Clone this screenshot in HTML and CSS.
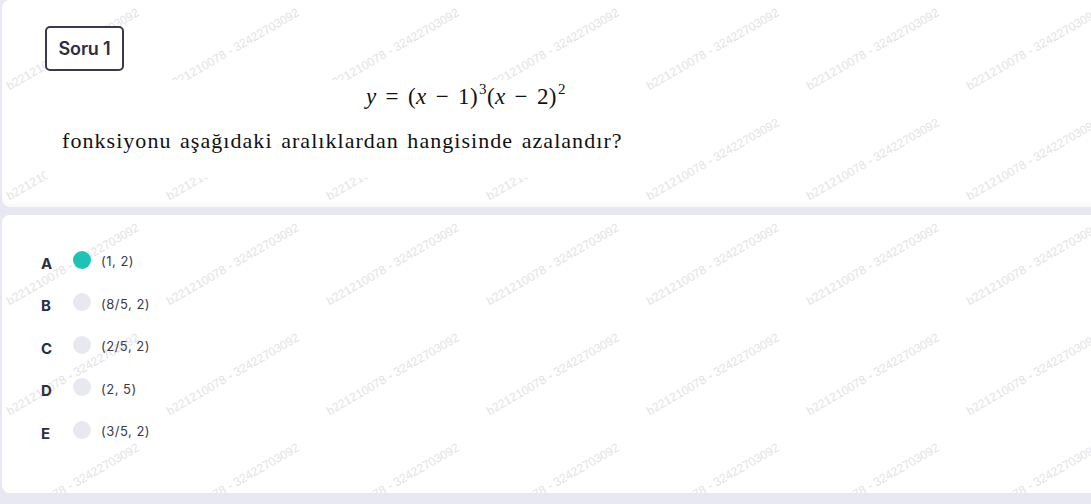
FILE: index.html
```html
<!DOCTYPE html>
<html lang="tr">
<head>
<meta charset="utf-8">
<title>Soru 1</title>
<link rel="stylesheet" href="styles.css">
</head>
<body>
<main class="page">
  <section class="card card-question">
    <div class="watermark" aria-hidden="true">
      <span>b221210078 - 32422703092</span><span>b221210078 - 32422703092</span><span>b221210078 - 32422703092</span><span>b221210078 - 32422703092</span><span>b221210078 - 32422703092</span><span>b221210078 - 32422703092</span><span>b221210078 - 32422703092</span>
      <span>b221210078 - 32422703092</span><span>b221210078 - 32422703092</span><span>b221210078 - 32422703092</span><span>b221210078 - 32422703092</span><span>b221210078 - 32422703092</span><span>b221210078 - 32422703092</span><span>b221210078 - 32422703092</span>
    </div>
    <div class="card-body">
      <div class="badge">Soru 1</div>
      <div class="question">
        <div class="formula"><i>y</i><span class="op">=</span>(<i>x</i><span class="op">−</span>1)<sup>3</sup>(<i>x</i><span class="op">−</span>2)<sup>2</sup></div>
        <p class="stem">fonksiyonu aşağıdaki aralıklardan hangisinde azalandır?</p>
      </div>
    </div>
  </section>

  <section class="card card-options">
    <div class="watermark" aria-hidden="true">
      <span>b221210078 - 32422703092</span><span>b221210078 - 32422703092</span><span>b221210078 - 32422703092</span><span>b221210078 - 32422703092</span><span>b221210078 - 32422703092</span><span>b221210078 - 32422703092</span><span>b221210078 - 32422703092</span>
      <span>b221210078 - 32422703092</span><span>b221210078 - 32422703092</span><span>b221210078 - 32422703092</span><span>b221210078 - 32422703092</span><span>b221210078 - 32422703092</span><span>b221210078 - 32422703092</span><span>b221210078 - 32422703092</span>
      <span>b221210078 - 32422703092</span><span>b221210078 - 32422703092</span><span>b221210078 - 32422703092</span><span>b221210078 - 32422703092</span><span>b221210078 - 32422703092</span><span>b221210078 - 32422703092</span><span>b221210078 - 32422703092</span>
    </div>
    <ul class="options">
      <li class="option selected"><span class="letter">A</span><span class="dot"></span><span class="text">(1, 2)</span></li>
      <li class="option"><span class="letter">B</span><span class="dot"></span><span class="text">(8/5, 2)</span></li>
      <li class="option"><span class="letter">C</span><span class="dot"></span><span class="text">(2/5, 2)</span></li>
      <li class="option"><span class="letter">D</span><span class="dot"></span><span class="text">(2, 5)</span></li>
      <li class="option"><span class="letter">E</span><span class="dot"></span><span class="text">(3/5, 2)</span></li>
    </ul>
  </section>
</main>
</body>
</html>
```

FILE: styles.css
```css
* { box-sizing: border-box; }

html, body {
  margin: 0;
  padding: 0;
  overflow: hidden;
}

body {
  background: #e7e8f2;
  font-family: "Inter", "Noto Sans", sans-serif;
  width: 1091px;
  height: 504px;
}

.page {
  display: flex;
  flex-direction: column;
  gap: 8px;
  padding-left: 2px;
  margin-right: -20px;
}

.card {
  position: relative;
  overflow: hidden;
  background: #ffffff;
  border-radius: 8px;
}

.card-question {
  height: 207px;
  box-shadow: inset 0 -6px 6px -4px rgba(40, 40, 80, 0.04);
}

.card-options {
  height: 278px;
}

/* watermark tiles */
.watermark {
  position: absolute;
  inset: 0;
  display: grid;
  grid-template-columns: repeat(7, 160px);
  grid-auto-rows: 110px;
  pointer-events: none;
  z-index: 0;
}

.watermark span {
  display: block;
  padding: 79px 0 0 9px;
  font-family: "Liberation Sans", Arial, sans-serif;
  font-size: 12px;
  line-height: 14px;
  white-space: nowrap;
  color: #e2e2e5;
  transform-origin: 9px 93px;
  transform: rotate(-30deg);
}

.card-body {
  position: relative;
  z-index: 1;
  padding: 26px 0 0 43px;
  display: flex;
  flex-direction: column;
  align-items: flex-start;
  gap: 9px;
}

.badge {
  width: 79px;
  height: 45px;
  border: 2px solid #3a3a4c;
  border-radius: 5px;
  background: #fff;
  display: flex;
  align-items: center;
  justify-content: center;
  font-family: "Inter", sans-serif;
  font-weight: 600;
  font-size: 18px;
  letter-spacing: -0.2px;
  color: #2e2e42;
}

.question {
  width: 585px;
  height: 98px;
  background: #fff;
  font-family: "Liberation Serif", "Times New Roman", serif;
  color: #111;
}

.formula {
  padding: 4px 0 0 321px;
  font-size: 23px;
  line-height: 26px;
  letter-spacing: 0.4px;
  white-space: nowrap;
}

.formula i {
  font-style: italic;
}

.formula .op {
  margin: 0 9px;
}

.formula sup {
  font-size: 15px;
  vertical-align: 10px;
  line-height: 0;
  margin-left: 1px;
}

.stem {
  margin: 18px 0 0 17px;
  font-size: 22px;
  line-height: 26px;
  letter-spacing: 1.05px;
  word-spacing: 2px;
  white-space: nowrap;
}

/* options */
.options {
  position: relative;
  z-index: 1;
  list-style: none;
  margin: 0;
  padding: 36px 0 0 39px;
  display: flex;
  flex-direction: column;
  gap: 22px;
}

.option {
  display: flex;
  align-items: center;
  height: 20.5px;
}

.letter {
  width: 32px;
  padding-top: 4px;
  font-family: "Inter", sans-serif;
  font-weight: 700;
  font-size: 15px;
  color: #2d2d42;
}

.dot {
  width: 18px;
  height: 18px;
  border-radius: 50%;
  background: #e8e9f0;
  margin-right: 10px;
  margin-top: -3px;
}

.option.selected .dot {
  background: #1dc4b5;
}

.text {
  font-family: "Inter", sans-serif;
  font-size: 13px;
  letter-spacing: 0.5px;
  color: #3a3a4c;
}
```
